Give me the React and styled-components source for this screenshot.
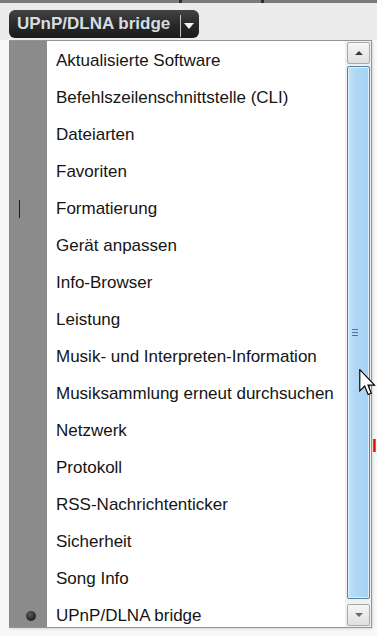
import React from "react";
import styled, { createGlobalStyle } from "styled-components";

const Global = createGlobalStyle`
  html, body { margin: 0; padding: 0; }
  body {
    background: #ededed;
    font-family: "Liberation Sans", Arial, sans-serif;
    width: 377px;
    height: 636px;
    overflow: hidden;
  }
`;

const Page = styled.div`
  position: relative;
  width: 377px;
  height: 636px;
  overflow: hidden;
`;

const TabStrip = styled.div`
  display: flex;
  height: 3px;
  background: #7b7b7b;
`;

const Tab = styled.div`
  width: ${(p) => p.$w}px;
  border-right: 3px solid #2e2e2e;
  box-sizing: border-box;
`;

const Header = styled.div`
  height: 37px;
  background: #ececec;
  padding: 7px 0 0 9px;
  box-sizing: border-box;
`;

const PluginButton = styled.div`
  width: 190px;
  height: 28px;
  box-sizing: border-box;
  border-radius: 6px;
  background: linear-gradient(#444444, #282828 55%, #1b1b1b);
  display: flex;
  align-items: center;
  padding-left: 8px;
  color: #d6dde2;
  font-weight: bold;
  font-size: 17px;
`;

const ButtonLabel = styled.span`
  width: 163px;
  white-space: nowrap;
`;

const Divider = styled.span`
  width: 1px;
  height: 22px;
  background: #c4c4c4;
  margin-top: 3px;
`;

const Caret = styled.span`
  width: 0;
  height: 0;
  margin-left: 3px;
  margin-top: 3px;
  border-left: 5px solid transparent;
  border-right: 5px solid transparent;
  border-top: 6px solid #f4f4f4;
`;

const Content = styled.div`
  height: 596px;
  background: #f7f7f7;
  padding-top: 396px;
  box-sizing: border-box;
`;

const HiddenText = styled.div`
  padding-left: 362px;
  color: #e01010;
  font-weight: bold;
  font-size: 18px;
  white-space: nowrap;
`;

const Menu = styled.div`
  position: absolute;
  left: 9px;
  top: 40px;
  width: 363px;
  height: 588px;
  box-sizing: border-box;
  border: 1px solid #949494;
  border-left: none;
  display: flex;
  background: #fff;
  box-shadow: 1px 1px 2px rgba(0, 0, 0, 0.12);
`;

const Items = styled.div`
  flex: 1;
  overflow: hidden;
  background: linear-gradient(to right, #8b8b8b 38px, #ffffff 38px);
  padding-top: 1.5px;
`;

const Item = styled.div`
  display: grid;
  grid-template-columns: 38px 1fr;
  height: 37px;
  align-items: center;
`;

const Marker = styled.div`
  height: 100%;
  display: flex;
  align-items: center;
`;

const Caretline = styled.span`
  display: block;
  width: 1px;
  height: 18px;
  background: #1a1a1a;
  margin-left: 10px;
`;

const Dot = styled.span`
  display: block;
  width: 10px;
  height: 10px;
  border-radius: 50%;
  margin-left: 17px;
  background: radial-gradient(circle at 40% 35%, #5a5a5a, #222222 70%);
`;

const Label = styled.div`
  padding-left: 9px;
  font-size: 17px;
  color: #151515;
  white-space: nowrap;
`;

const ScrollBar = styled.div`
  width: 26px;
  box-sizing: border-box;
  background: #f0f0f0;
  padding: 1px 1px 1px 2px;
  display: flex;
  flex-direction: column;
  gap: 2px;
`;

const ArrowButton = styled.div`
  height: 22px;
  box-sizing: border-box;
  border: 1px solid #a9a9a9;
  border-radius: 2px;
  background: linear-gradient(#f6f6f6, #e0e0e0);
  display: flex;
  align-items: center;
  justify-content: center;
`;

const Arrow = styled.span`
  width: 0;
  height: 0;
  border-left: 4px solid transparent;
  border-right: 4px solid transparent;
  ${(p) =>
    p.$up
      ? "border-bottom: 4px solid #3a3a3a;"
      : "border-top: 4px solid #6a6a6a;"}
`;

const Thumb = styled.div`
  flex: 1;
  margin: 0 0 3px;
  box-sizing: border-box;
  border: 1px solid #55809f;
  border-radius: 2px;
  background: linear-gradient(to right, #c4e3f9, #aed7f5 40%, #a5d2f3);
  box-shadow: inset 0 0 0 1px #dff0fc;
  display: flex;
  justify-content: center;
  padding-top: 262px;
`;

const Grip = styled.div`
  display: flex;
  flex-direction: column;
  gap: 2px;
  margin-left: -7px;
`;

const GripLine = styled.span`
  display: block;
  width: 6px;
  height: 1px;
  background: #4a78a0;
`;

const Cursor = styled.svg`
  position: absolute;
  left: 359px;
  top: 369px;
`;

const items = [
  "Aktualisierte Software",
  "Befehlszeilenschnittstelle (CLI)",
  "Dateiarten",
  "Favoriten",
  "Formatierung",
  "Gerät anpassen",
  "Info-Browser",
  "Leistung",
  "Musik- und Interpreten-Information",
  "Musiksammlung erneut durchsuchen",
  "Netzwerk",
  "Protokoll",
  "RSS-Nachrichtenticker",
  "Sicherheit",
  "Song Info",
  "UPnP/DLNA bridge",
];

export default function App() {
  return (
    <Page>
      <Global />
      <TabStrip>
        <Tab $w={182} />
        <Tab $w={82} />
      </TabStrip>
      <Header>
        <PluginButton>
          <ButtonLabel>UPnP/DLNA bridge</ButtonLabel>
          <Divider />
          <Caret />
        </PluginButton>
      </Header>
      <Content>
        <HiddenText>el</HiddenText>
      </Content>
      <Menu>
        <Items>
          {items.map((t, i) => (
            <Item key={t}>
              <Marker>
                {i === 4 && <Caretline />}
                {i === items.length - 1 && <Dot />}
              </Marker>
              <Label>{t}</Label>
            </Item>
          ))}
        </Items>
        <ScrollBar>
          <ArrowButton>
            <Arrow $up />
          </ArrowButton>
          <Thumb>
            <Grip>
              <GripLine />
              <GripLine />
              <GripLine />
            </Grip>
          </Thumb>
          <ArrowButton>
            <Arrow />
          </ArrowButton>
        </ScrollBar>
      </Menu>
      <Cursor width="17" height="27" viewBox="0 0 13 21">
        <path
          d="M0.5 0.5 L0.5 17 L4.3 13.3 L7 19.8 L9.4 18.8 L6.9 12.6 L12 12.6 Z"
          fill="#ffffff"
          stroke="#000000"
          strokeWidth="0.9"
          strokeLinejoin="miter"
        />
      </Cursor>
    </Page>
  );
}
